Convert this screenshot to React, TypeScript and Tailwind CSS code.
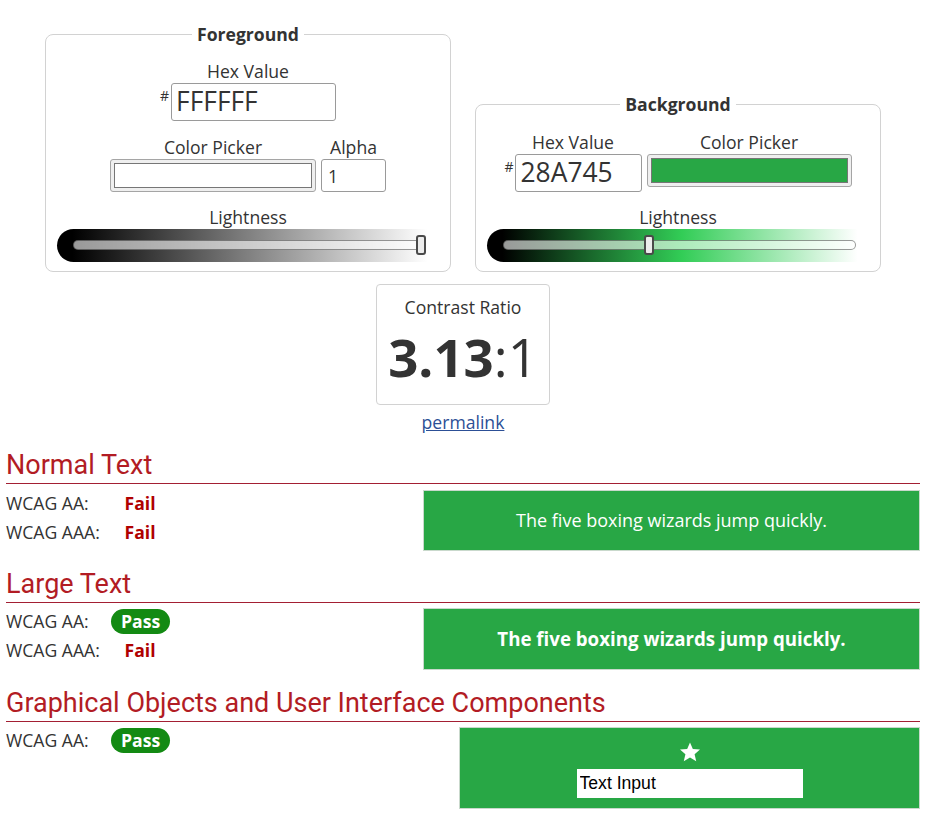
import { useState } from "react";

// colours picked off the contrast checker look
const RED = "text-[#b21c24]";

function Slider({ bar, thumb }: { bar: string; thumb: number }) {
  return (
    <div className={`mx-[11px] h-[33px] rounded-l-full pl-[16px] pr-[13px] pt-[11px] ${bar}`}>
      <div className="relative h-[10px] rounded-full border border-black/40 bg-white/60">
        <div
          className="absolute top-[-6px] h-[20px] w-[10px] rounded-[3px] border-2 border-[#4a4a4a] bg-[#ececec]"
          style={{ left: thumb }}
        />
      </div>
    </div>
  );
}

function Picker({ color, w }: { color: string; w: string }) {
  return (
    <div className={`flex h-[33px] rounded-[3px] border border-[#a5a5a5] bg-[#efefef] px-[3px] py-[3px] ${w}`}>
      <div className="flex-1 border border-[#767676]" style={{ background: color }} />
    </div>
  );
}

function Label({ children }: { children: string }) {
  return <p className="text-center text-[17.6px] leading-[24px]">{children}</p>;
}

function Result({ ok }: { ok: boolean }) {
  return (
    <div className="w-[58px] text-center">
      {ok ? (
        <span className="inline-block h-[25px] rounded-full bg-[#138a13] px-[10px] font-bold leading-[25px] text-white">Pass</span>
      ) : (
        <span className="font-bold text-[#b00000]">Fail</span>
      )}
    </div>
  );
}

function Row({ k, ok }: { k: string; ok: boolean }) {
  return (
    <div className="flex h-[29px] items-center">
      <span className="w-[105px]">{k}</span>
      <Result ok={ok} />
    </div>
  );
}

function Heading({ children, mt }: { children: string; mt: string }) {
  return (
    <h2 className={`${mt} border-b border-[#a31f33] pb-[3px] font-['Roboto',sans-serif] text-[27px] leading-[30px] ${RED}`}>
      {children}
    </h2>
  );
}

export default function App() {
  const [fg, setFg] = useState("FFFFFF");
  const [bg, setBg] = useState("28A745");
  const [alpha, setAlpha] = useState("1");

  return (
    <div className="w-[926px] bg-white px-[6px] pt-[23px] pb-[9px] font-['Open_Sans',sans-serif] text-[17.6px] text-[#333]">
      <div className="flex items-end justify-center gap-[24px]">
        <fieldset className="w-[406px] rounded-lg border border-[#d2d2d2] pb-[9px]">
          <legend className="mx-auto px-[5px] text-[17.6px] font-bold leading-[23px]">Foreground</legend>
          <div className="pt-[13px]">
            <Label>Hex Value</Label>
            <div className="flex justify-center">
              <span className="mt-[3px] text-[14px] leading-[20px]">#</span>
              <input
                value={fg}
                onChange={(e) => setFg(e.target.value)}
                className="ml-[2px] h-[38px] w-[165px] rounded-[3px] border border-[#9a9a9a] px-[4px] text-[26.4px] outline-none"
              />
            </div>
            <div className="mt-[14px] flex justify-center gap-[5px]">
              <div>
                <Label>Color Picker</Label>
                <Picker color="#ffffff" w="w-[206px]" />
              </div>
              <div>
                <Label>Alpha</Label>
                <input
                  value={alpha}
                  onChange={(e) => setAlpha(e.target.value)}
                  className="h-[33px] w-[65px] rounded-[3px] border border-[#9a9a9a] px-[6px] outline-none"
                />
              </div>
            </div>
            <div className="mt-[13px]">
              <Label>Lightness</Label>
              <Slider bar="bg-[linear-gradient(to_right,#000_4%,#808080_50%,#fff_97%)]" thumb={342} />
            </div>
          </div>
        </fieldset>

        <fieldset className="w-[406px] rounded-lg border border-[#d2d2d2] pb-[9px]">
          <legend className="mx-auto px-[5px] text-[17.6px] font-bold leading-[23px]">Background</legend>
          <div className="pt-[14px]">
            <div className="flex justify-center gap-[5px]">
              <div>
                <Label>Hex Value</Label>
                <div className="flex">
                  <span className="mt-[3px] text-[14px] leading-[20px]">#</span>
                  <input
                    value={bg}
                    onChange={(e) => setBg(e.target.value)}
                    className="ml-[1px] h-[38px] w-[127px] rounded-[3px] border border-[#9a9a9a] px-[5px] text-[26.4px] outline-none"
                  />
                </div>
              </div>
              <div>
                <Label>Color Picker</Label>
                <Picker color="#28a745" w="w-[205px]" />
              </div>
            </div>
            <div className="mt-[13px]">
              <Label>Lightness</Label>
              <Slider
                bar="bg-[linear-gradient(to_right,#000_4%,#19672b_27%,#32cd56_51%,#98e6ab_74%,#fff_97%)]"
                thumb={140}
              />
            </div>
          </div>
        </fieldset>
      </div>

      <div className="mx-auto mt-[12px] w-[174px] rounded-[4px] border border-[#d2d2d2] pt-[10px] pb-[20px] text-center">
        <p className="leading-[24px]">Contrast Ratio</p>
        <p className="mt-[12px] text-[52.8px] leading-none">
          <span className="font-bold">3.13</span>:1
        </p>
      </div>
      <p className="mt-[5px] text-center leading-[24px]">
        <a href="#" className="text-[#2c4f96] underline">permalink</a>
      </p>

      <Heading mt="mt-[16px]">Normal Text</Heading>
      <div className="mt-[6px] flex items-start justify-between">
        <div className="-mt-px">
          <Row k="WCAG AA:" ok={false} />
          <Row k="WCAG AAA:" ok={false} />
        </div>
        <div className="flex h-[61px] w-[497px] items-center justify-center border border-[#c9d9cc] text-[18px] text-white" style={{ background: `#${bg}` }}>
          The five boxing wizards jump quickly.
        </div>
      </div>

      <Heading mt="mt-[18px]">Large Text</Heading>
      <div className="mt-[5px] flex items-start justify-between">
        <div className="-mt-px">
          <Row k="WCAG AA:" ok />
          <Row k="WCAG AAA:" ok={false} />
        </div>
        <div className="flex h-[62px] w-[497px] items-center justify-center border border-[#c9d9cc] text-[18.7px] font-bold text-white" style={{ background: `#${bg}` }}>
          The five boxing wizards jump quickly.
        </div>
      </div>

      <Heading mt="mt-[18px]">Graphical Objects and User Interface Components</Heading>
      <div className="mt-[5px] flex items-start justify-between">
        <div className="-mt-px">
          <Row k="WCAG AA:" ok />
        </div>
        <div className="flex h-[82px] w-[461px] flex-col items-center border border-[#c9d9cc] pt-[13px]" style={{ background: `#${bg}` }}>
          <svg width="22" height="22" viewBox="0 0 24 24" fill="#fff">
            <path d="M12 1.5l3.1 7.2 7.8.6-5.9 5.1 1.8 7.6L12 17.9 5.2 22l1.8-7.6-5.9-5.1 7.8-.6z" />
          </svg>
          <input
            defaultValue="Text Input"
            className="mt-[6px] h-[29px] w-[226px] bg-white px-[3px] font-['Liberation_Sans',Arial,sans-serif] text-[17.6px] text-black outline-none"
          />
        </div>
      </div>
    </div>
  );
}
